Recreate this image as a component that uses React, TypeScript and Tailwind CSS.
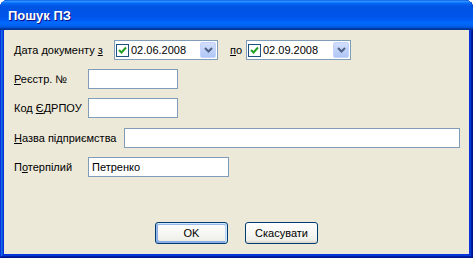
import React from "react";

const font = "font-['Tahoma','Liberation_Sans',sans-serif]";

function Check() {
  return (
    <div className="w-[13px] h-[13px] border border-[#1C5180] bg-white flex items-center justify-center shrink-0">
      <svg width="9" height="9" viewBox="0 0 9 9">
        <path d="M1 4 L3.5 6.5 L8 1.5" stroke="#21A121" strokeWidth="2" fill="none" />
      </svg>
    </div>
  );
}

function DropBtn() {
  return (
    <div className="w-[16px] h-[16px] rounded-[2px] bg-gradient-to-b from-[#D2DEFC] to-[#B0C6F5] border border-[#C3D3FD] flex items-center justify-center shrink-0">
      <svg width="9" height="6" viewBox="0 0 9 6">
        <path d="M1 1 L4.5 4.5 L8 1" stroke="#4D6185" strokeWidth="2" fill="none" />
      </svg>
    </div>
  );
}

function DatePicker({ value, width }: { value: string; width: string }) {
  return (
    <div className={`${width} h-[20px] border border-[#7F9DB9] bg-white flex items-center pl-[1px] pr-[1px]`}>
      <Check />
      <span className="ml-[2px] text-[11px] text-black leading-none flex-1">{value}</span>
      <DropBtn />
    </div>
  );
}

function Input({ width, value }: { width: string; value?: string }) {
  return (
    <div className={`${width} h-[20px] border border-[#7F9DB9] bg-white flex items-center pl-[3px] text-[11px] text-black`}>
      {value}
    </div>
  );
}

export default function App() {
  return (
    <div className={`w-[473px] h-[258px] flex flex-col rounded-t-[8px] overflow-hidden bg-[#0831D9] shadow-[inset_-1px_-1px_#00138c,inset_1px_1px_#0831d9,inset_-2px_-2px_#001ea0,inset_2px_2px_#166aee,inset_-3px_-3px_#003bda,inset_3px_3px_#0855dd] ${font}`}>
      <div className="h-[30px] shrink-0 flex items-center pl-[8px] bg-[linear-gradient(to_bottom,#0058ee_0%,#3593ff_4%,#288eff_6%,#127dff_8%,#036ffc_10%,#0262ee_14%,#0057e5_20%,#0054e3_24%,#0055eb_56%,#005bf5_66%,#026afe_76%,#0062ef_86%,#0052d6_92%,#0040ab_94%,#003092_100%)]">
        <span className="text-white font-bold text-[13px] [text-shadow:1px_1px_#0f1089] pt-[1px]">Пошук ПЗ</span>
      </div>
      <div className="flex-1 mx-[4px] mb-[4px] bg-[#ECE9D8] flex flex-col pl-[10px] pt-[10px] pb-[10px] text-[11px] text-black">
        <div className="flex items-center h-[20px]">
          <span className="w-[100px]">
            Дата документу <u className="underline-offset-[1px]">з</u>
          </span>
          <DatePicker value="02.06.2008" width="w-[104px]" />
          <span className="ml-[12px] w-[16px]">
            <u className="underline-offset-[1px]">п</u>о
          </span>
          <DatePicker value="02.09.2008" width="w-[105px]" />
        </div>
        <div className="flex items-center h-[20px] mt-[9px]">
          <span className="w-[74px]">
            <u className="underline-offset-[1px]">Р</u>еєстр. №
          </span>
          <Input width="w-[90px]" />
        </div>
        <div className="flex items-center h-[20px] mt-[9px]">
          <span className="w-[74px]">
            Код <u className="underline-offset-[1px]">Є</u>ДРПОУ
          </span>
          <Input width="w-[90px]" />
        </div>
        <div className="flex items-center h-[20px] mt-[10px]">
          <span className="w-[110px]">
            <u className="underline-offset-[1px]">Н</u>азва підприємства
          </span>
          <Input width="w-[336px]" />
        </div>
        <div className="flex items-center h-[20px] mt-[9px]">
          <span className="w-[74px]">
            П<u className="underline-offset-[1px]">о</u>терпілий
          </span>
          <Input width="w-[141px]" value="Петренко" />
        </div>
        <div className="flex-1" />
        <div className="flex justify-center gap-[17px] pr-[10px]">
          <button className="w-[73px] h-[22px] border border-[#003C74] rounded-[3px] bg-[linear-gradient(to_bottom,#ffffff_0%,#f0f0ea_86%,#d6d0c5_100%)] shadow-[inset_-1px_1px_#cee7ff,inset_1px_2px_#98b8ea,inset_-2px_2px_#bcd4f6,inset_1px_-1px_#89ade4,inset_2px_-2px_#89ade4] text-[11px] text-black">
            OK
          </button>
          <button className="w-[73px] h-[22px] border border-[#003C74] rounded-[3px] bg-[linear-gradient(to_bottom,#ffffff_0%,#f0f0ea_86%,#d6d0c5_100%)] text-[11px] text-black">
            Скасувати
          </button>
        </div>
      </div>
    </div>
  );
}
